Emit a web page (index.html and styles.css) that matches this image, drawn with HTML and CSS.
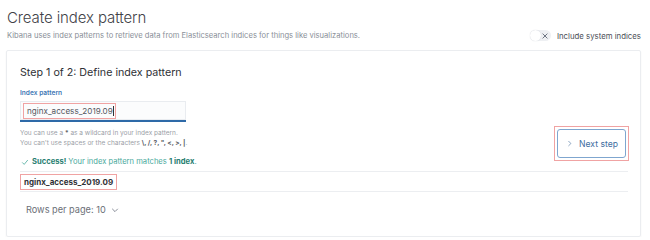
FILE: index.html
```html
<!DOCTYPE html>
<html lang="en">
<head>
  <meta charset="UTF-8">
  <title>Create index pattern</title>
  <link rel="stylesheet" href="styles.css">
</head>
<body>
  <div class="page">
    <div class="header">
      <div>
        <h1 class="title">Create index pattern</h1>
        <p class="subtitle">Kibana uses index patterns to retrieve data from Elasticsearch indices for things like visualizations.</p>
      </div>
      <label class="switch">
        <span class="track">
          <span class="knob"></span>
          <svg class="x" viewBox="0 0 10 10" width="8" height="8"><path d="M2 2 L8 8 M8 2 L2 8" stroke="#69707d" stroke-width="1.2" fill="none"/></svg>
        </span>
        <span class="switch-label">Include system indices</span>
      </label>
    </div>

    <div class="panel">
      <h2 class="step">Step 1 of 2: Define index pattern</h2>
      <div class="row">
        <div class="form">
          <div class="label">Index pattern</div>
          <div class="input">
            <span class="mark">nginx_access_2019.09</span><span class="caret"></span>
          </div>
          <div class="help">
            You can use a <b>*</b> as a wildcard in your index pattern.<br>
            You can't use spaces or the characters <b>\, /, ?, ", &lt;, &gt;, |</b>.
          </div>
        </div>
        <div class="action">
          <span class="mark-btn">
            <button class="btn">
              <svg viewBox="0 0 10 10" width="7" height="7"><path d="M3.5 1.5 L7 5 L3.5 8.5" stroke="#5a7ea6" stroke-width="1" fill="none"/></svg>
              Next step
            </button>
          </span>
        </div>
      </div>

      <div class="success">
        <svg viewBox="0 0 10 10" width="8" height="8"><path d="M1.5 5.5 L4 8 L8.5 2.5" stroke="#4aa99c" stroke-width="1" fill="none"/></svg>
        <span><b>Success!</b> Your index pattern matches <b>1 index</b>.</span>
      </div>

      <div class="table">
        <div class="cell"><span class="mark bold">nginx_access_2019.09</span></div>
      </div>

      <div class="pager">
        Rows per page: 10
        <svg viewBox="0 0 10 10" width="8" height="8"><path d="M1.5 3.5 L5 7 L8.5 3.5" stroke="#69707d" stroke-width="1" fill="none"/></svg>
      </div>
    </div>
  </div>
</body>
</html>
```

FILE: styles.css
```css
html, body { margin: 0; padding: 0; background: #fff; }
body { font-family: Inter, "Noto Sans", sans-serif; color: #343741; }
.page { padding: 0 9px 0 6px; width: 635px; }

.header { display: flex; justify-content: space-between; align-items: flex-end; padding-left: 1px; }
.title { margin: 0; padding-top: 8px; font-size: 15px; font-weight: 300; color: #3f4248; letter-spacing: -0.1px; line-height: 20px; }
.subtitle { margin: 2px 0 0; font-size: 7.6px; color: #8a8f98; line-height: 11px; }

.switch { display: flex; align-items: center; gap: 6px; margin-bottom: 0; }
.track { position: relative; display: inline-block; width: 21px; height: 11px; border-radius: 6px; background: #eef0f3; }
.knob { position: absolute; left: 0; top: 0; width: 11px; height: 11px; border-radius: 50%; background: #fff; box-shadow: 0 0 1px #c6cad1; }
.track .x { position: absolute; right: 2px; top: 1.5px; }
.switch-label { font-size: 7.8px; color: #4b4f58; }

.panel {
  margin-top: 9px; border: 1px solid #ebedf0; border-radius: 2px;
  box-shadow: 0 1px 2px rgba(0,0,0,0.06);
  padding: 14px 12px 9px 13px; height: 162px;
}
.step { margin: 0; font-size: 10.7px; font-weight: 400; color: #2f3136; line-height: 16px; }

.row { display: flex; justify-content: space-between; align-items: flex-start; }
.form { width: 166px; }
.label { margin-top: 7px; font-size: 6.6px; font-weight: 600; color: #3f77b5; line-height: 10px; }
.input {
  margin-top: 3px; height: 19px; background: #fbfcfd; border-bottom: 2px solid #2e6aa8;
  box-shadow: inset 0 0 0 1px #e9ecf0; display: flex; align-items: center; padding-left: 3px;
}
.mark { border: 1px solid #f0a3a3; padding: 1px 2px 1px 3px; font-size: 8.1px; color: #54575e; line-height: 12px; }
.caret { width: 1px; height: 10px; background: #333; margin-left: -3px; }
.help { margin-top: 6px; font-size: 6.5px; color: #9a9ea6; line-height: 10px; white-space: nowrap; }
.help b { color: #5a5e66; }

.action { padding-top: 45px; margin-right: -1px; margin-bottom: -30px; }
.mark-btn { display: inline-block; border: 1px solid #f0a3a3; padding: 2px; }
.btn {
  display: flex; align-items: center; gap: 6px; height: 29px; padding: 0 7px 0 8px;
  border: 1px solid #7fa6cf; border-radius: 3px; background: #fff;
  font-family: Inter, "Noto Sans", sans-serif; font-size: 8.6px; color: #3f6e9f;
}

.success { margin-top: 8px; display: flex; align-items: center; gap: 3px; font-size: 7.6px; color: #4aa99c; line-height: 12px; padding-left: 1px; }
.success b { color: #267d70; font-weight: 700; }

.table { margin-top: 3px; border-top: 1px solid #eceef1; border-bottom: 1px solid #eceef1; width: 608px; padding: 1px 0 1px 0; }
.cell { height: 17px; display: flex; align-items: center; }
.bold { font-weight: 700; color: #2f3136; font-size: 8px; padding: 1px 3px; }

.pager { margin-top: 12px; padding-left: 6px; font-size: 9.2px; color: #6b6f77; display: flex; align-items: center; gap: 5px; }
```
